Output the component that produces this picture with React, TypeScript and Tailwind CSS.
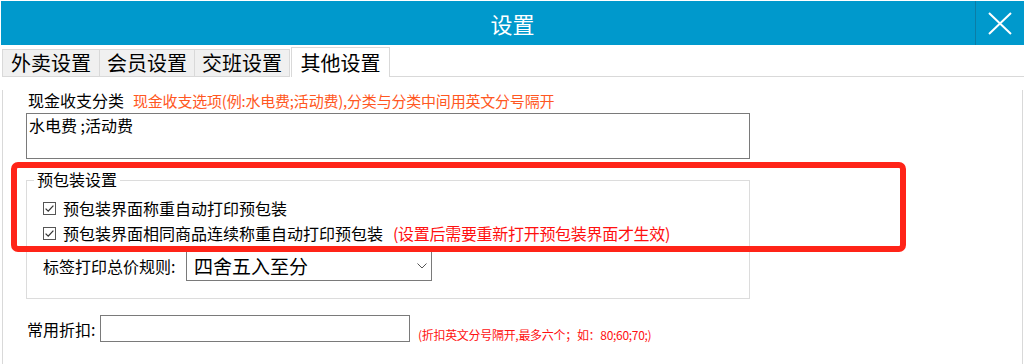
import React from 'react';

const tabs = ['外卖设置', '会员设置', '交班设置'];

const CheckBox = () => (
  <svg width="13" height="13" viewBox="0 0 13 13" className="shrink-0">
    <rect x="0.5" y="0.5" width="12" height="12" fill="#fff" stroke="#555" />
    <path d="M2.6 6.6 L5.2 9.1 L10.4 3.6" fill="none" stroke="#333" strokeWidth="1.3" />
  </svg>
);

export default function App() {
  return (
    <div
      className="relative w-[1026px] h-[364px] overflow-hidden bg-white text-black"
      style={{ fontFamily: '"Noto Sans CJK SC", "Noto Sans", sans-serif' }}
    >
      <div className="ml-[1px] w-[1023px]">
        {/* title bar */}
        <div className="mt-[1px] h-[44px] flex bg-[#0099cc] text-white">
          <div className="w-[49px]" />
          <div className="flex-1 flex items-center justify-center text-[22px] leading-[28px]">设置</div>
          <div className="w-[1px] bg-[#0b7da6]" />
          <div className="w-[48px] flex items-center justify-center">
            <svg width="24" height="23" viewBox="0 0 24 23">
              <path d="M1 1 L23 22 M23 1 L1 22" stroke="#fff" strokeWidth="2" fill="none" />
            </svg>
          </div>
        </div>

        {/* tabs */}
        <div className="ml-[1px] h-[32px] flex items-end">
          {tabs.map((t, i) => (
            <div
              key={t}
              className={`h-[28px] ${i === 0 ? 'w-[98px]' : 'w-[96px] -ml-px'} flex items-center justify-center border border-[#d9d9d9] bg-[#f0f0f0] text-[20px] leading-[24px]`}
            >
              {t}
            </div>
          ))}
          <div className="ml-px h-[30px] w-[99px] flex items-center justify-center border-t border-l border-r border-[#d9d9d9] bg-white text-[20px] leading-[24px]">
            其他设置
          </div>
          <div className="flex-1 h-[1px] bg-[#d9d9d9]" />
        </div>

        {/* content panel */}
        <div className="ml-[1px] mr-[1px] h-[290px] border-l border-r border-[#d9d9d9]">
          <div className="mt-[13px] ml-[25px] h-[20px] flex items-baseline gap-[9px]">
            <span className="text-[16px] leading-[20px]">现金收支分类</span>
            <span className="text-[15px] leading-[20px] tracking-[-0.2px] text-[#ff5722]">
              现金收支选项(例:水电费;活动费),分类与分类中间用英文分号隔开
            </span>
          </div>

          <textarea
            readOnly
            value="水电费 ;活动费"
            className="block mt-[3px] ml-[23px] w-[724px] h-[46px] resize-none overflow-hidden border border-[#7a7a7a] px-[2px] pt-[1px] text-[16px] leading-[20px] outline-none"
          />

          {/* group box */}
          <div className="relative mt-[21px] ml-[23px] w-[724px] h-[119px] border border-[#dcdcdc]">
            <span className="absolute left-[7px] top-[-12px] bg-white px-[3px] text-[16px] leading-[20px]">
              预包装设置
            </span>
            <div className="pt-[17px] pl-[16px]">
              <div className="h-[20px] flex items-center gap-[7px]">
                <CheckBox />
                <span className="text-[16px] leading-[20px]">预包装界面称重自动打印预包装</span>
              </div>
              <div className="mt-[5px] h-[20px] flex items-center gap-[7px]">
                <CheckBox />
                <span className="text-[16px] leading-[20px]">预包装界面相同商品连续称重自动打印预包装</span>
                <span className="ml-[3px] text-[16px] leading-[20px] tracking-[-0.3px] text-[#ff1010]">(设置后需要重新打开预包装界面才生效)</span>
              </div>
              <div className="mt-[8px] flex items-center">
                <span className="w-[143px] text-[16px] leading-[20px]">标签打印总价规则:</span>
                <div className="w-[246px] h-[30px] flex items-center justify-between border border-[#7a7a7a] pl-[7px] pr-[4px]">
                  <span className="text-[19px] leading-[24px]">四舍五入至分</span>
                  <svg width="10" height="6" viewBox="0 0 10 6">
                    <path d="M0.5 0.5 L5 5 L9.5 0.5" fill="none" stroke="#555" strokeWidth="1" />
                  </svg>
                </div>
              </div>
            </div>
          </div>

          {/* discount row */}
          <div className="mt-[16px] ml-[24px] flex items-center">
            <span className="w-[73px] text-[16px] leading-[20px]">常用折扣:</span>
            <div className="w-[310px] h-[27px] border border-[#7a7a7a]" />
            <span className="self-end mb-[-1px] ml-[8px] text-[12px] leading-[16px] tracking-[-0.3px] text-[#ff1010]">
              (折扣英文分号隔开,最多六个；如：80;60;70;)
            </span>
          </div>
        </div>
      </div>

      {/* red annotation box */}
      <div className="absolute left-[11px] top-[162px] w-[895px] h-[90px] border-[6px] border-[#ff2418] rounded-[7px]" />
    </div>
  );
}
